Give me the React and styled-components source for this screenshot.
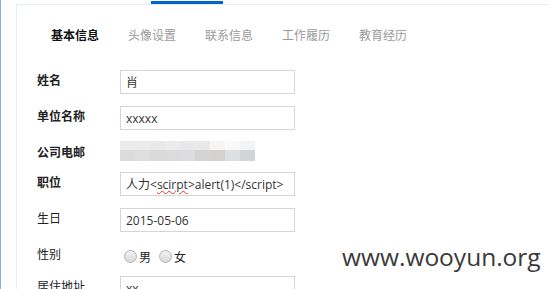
import React from "react";
import styled, { createGlobalStyle } from "styled-components";

const Global = createGlobalStyle`
  html, body { margin: 0; padding: 0; background: #fff; }
  body { font-family: "Open Sans", "Noto Sans CJK SC", sans-serif; color: #333; }
  * { box-sizing: border-box; }
`;

const Page = styled.div`
  position: relative;
  display: flex;
  width: 549px;
  height: 289px;
  overflow: hidden;
  background: #fff;
`;

const Rail = styled.div`
  width: 1px;
  flex: none;
  background: #7fb3e9;
`;

const Main = styled.div`
  flex: 1;
  margin-left: 15px;
  display: flex;
  flex-direction: column;
`;

const TopStrip = styled.div`
  height: 4px;
  display: flex;
`;

const ActiveBar = styled.div`
  margin-left: 135px;
  margin-top: 1px;
  width: 72px;
  height: 3px;
  background: #0066cc;
`;

const Panel = styled.div`
  flex: 1;
  border-top: 1px solid #e3edf8;
  border-left: 1px solid #e3edf8;
  padding: 20px 0 0 0;
`;

const Tabs = styled.div`
  display: flex;
  gap: 29px;
  padding-left: 34px;
  height: 20px;
  align-items: center;
`;

const Tab = styled.div`
  font-family: "Noto Sans CJK SC", sans-serif;
  font-size: 12px;
  line-height: 20px;
  width: 48px;
  white-space: nowrap;
  color: ${(p) => (p.$active ? "#111" : "#9a9a9a")};
  font-weight: ${(p) => (p.$active ? 700 : 400)};
`;

const Form = styled.div`
  margin-top: 25px;
  padding-left: 20px;
  display: flex;
  flex-direction: column;
  gap: 12px;
`;

const Row = styled.div`
  display: flex;
  align-items: flex-start;
  height: ${(p) => p.$h}px;
`;

const Label = styled.div`
  width: 83px;
  flex: none;
  font-family: "Noto Sans CJK SC", sans-serif;
  font-size: 12px;
  line-height: 19px;
  color: #222;
  font-weight: ${(p) => (p.$strong ? 700 : 400)};
`;

const Field = styled.div`
  width: 175px;
  height: 24px;
  border: 1px solid #d6d6d6;
  padding: 0 5px;
  display: flex;
  align-items: center;
  font-size: 12px;
  color: #333;
  white-space: nowrap;
  overflow: hidden;
`;

const Squiggle = styled.span`
  text-decoration: underline wavy #e33;
  text-decoration-thickness: 1px;
  text-underline-offset: 1px;
`;

const Mosaic = styled.div`
  display: grid;
  grid-template-columns: repeat(9, 15px);
  grid-template-rows: 9px 11px;
  margin-top: -1px;
`;

const Cell = styled.div`
  background: ${(p) => p.$c};
`;

const Radios = styled.div`
  display: flex;
  align-items: center;
  gap: 8px;
  padding-left: 4px;
  height: 20px;
  margin-top: 2px;
`;

const RadioItem = styled.label`
  display: flex;
  align-items: center;
  gap: 2px;
  font-family: "Noto Sans CJK SC", sans-serif;
  font-size: 12px;
  color: #222;
`;

const Dot = styled.span`
  width: 13px;
  height: 13px;
  border-radius: 50%;
  border: 1px solid #b4b4b4;
  background: linear-gradient(#f2f2f2, #d9d9d9);
`;

const Watermark = styled.div`
  position: absolute;
  left: 342px;
  top: 240px;
  font-family: "Open Sans", sans-serif;
  font-size: 24.5px;
  color: #3a3a3a;
  letter-spacing: 0;
`;

const top = ["#ececec", "#ebebeb", "#e9e9e9", "#ebebeb", "#e8e8e8", "#e9e9e9", "#f5f5f5", "#f9f9f9", "#f3f3f3"];
const bottom = ["#dcdcdc", "#dedede", "#dadada", "#dcdadc", "#dddddf", "#d4d4d4", "#d4d2d0", "#dde0e2", "#d2d4d5"];

export default function App() {
  return (
    <>
      <Global />
      <Page>
        <Rail />
        <Main>
          <TopStrip>
            <ActiveBar />
          </TopStrip>
          <Panel>
            <Tabs>
              <Tab $active>基本信息</Tab>
              <Tab>头像设置</Tab>
              <Tab>联系信息</Tab>
              <Tab>工作履历</Tab>
              <Tab>教育经历</Tab>
            </Tabs>
            <Form>
              <Row $h={24}>
                <Label $strong>姓名</Label>
                <Field>肖</Field>
              </Row>
              <Row $h={24}>
                <Label $strong>单位名称</Label>
                <Field>xxxxx</Field>
              </Row>
              <Row $h={18}>
                <Label $strong>公司电邮</Label>
                <Mosaic>
                  {top.map((c, i) => <Cell key={"t" + i} $c={c} />)}
                  {bottom.map((c, i) => <Cell key={"b" + i} $c={c} />)}
                </Mosaic>
              </Row>
              <Row $h={24}>
                <Label $strong>职位</Label>
                <Field>
                  人力&lt;<Squiggle>scirpt</Squiggle>&gt;alert(1)&lt;/script&gt;
                </Field>
              </Row>
              <Row $h={24}>
                <Label>生日</Label>
                <Field>2015-05-06</Field>
              </Row>
              <Row $h={20}>
                <Label>性别</Label>
                <Radios>
                  <RadioItem><Dot />男</RadioItem>
                  <RadioItem><Dot />女</RadioItem>
                </Radios>
              </Row>
              <Row $h={24}>
                <Label>居住地址</Label>
                <Field>xx</Field>
              </Row>
            </Form>
          </Panel>
        </Main>
        <Watermark>www.wooyun.org</Watermark>
      </Page>
    </>
  );
}
